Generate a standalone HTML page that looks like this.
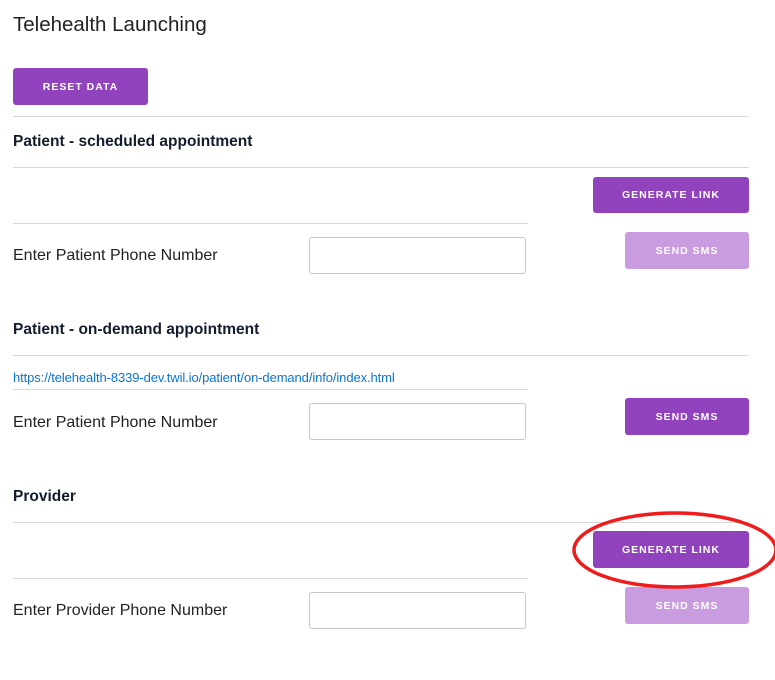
<!DOCTYPE html>
<html><head><style>
body{margin:0;width:775px;height:680px;background:#fff;position:relative;overflow:hidden;font-family:"Liberation Sans",sans-serif;color:#121c2d}
.a{position:absolute}
.hr{position:absolute;height:1px;background:#d8d8d8}
.btn{position:absolute;background:#9143bd;color:#fff;border-radius:3px;font-size:10.5px;font-weight:bold;letter-spacing:1px;display:flex;align-items:center;justify-content:center}
.dis{background:#c99ce0}
.h{position:absolute;left:13px;font-size:15.5px;font-weight:bold;line-height:20px}
.lbl{position:absolute;left:13px;font-size:16px;line-height:20px;color:#222}
.inp{position:absolute;left:309px;width:215px;height:35px;border:1px solid #c8c8c8;border-radius:3px}
</style></head><body>
<div class="a" style="left:13px;top:11px;font-size:20.5px;line-height:28px;color:#222">Telehealth Launching</div>
<div class="btn" style="left:13px;top:68px;width:135px;height:37px">RESET DATA</div>
<div class="hr" style="left:13px;top:116px;width:736px"></div>
<div class="h" style="top:132px">Patient - scheduled appointment</div>
<div class="hr" style="left:13px;top:167px;width:736px"></div>
<div class="btn" style="left:593px;top:177px;width:156px;height:36px">GENERATE LINK</div>
<div class="hr" style="left:13px;top:223px;width:515px"></div>
<div class="lbl" style="top:246px">Enter Patient Phone Number</div>
<div class="inp" style="top:237px"></div>
<div class="btn dis" style="left:625px;top:232px;width:124px;height:37px">SEND SMS</div>
<div class="h" style="top:320px">Patient - on-demand appointment</div>
<div class="hr" style="left:13px;top:355px;width:736px"></div>
<div class="a" style="left:13px;top:370px;font-size:13px;line-height:15px;color:#0a74da;letter-spacing:-0.1px">https://telehealth-8339-dev.twil.io/patient/on-demand/info/index.html</div>
<div class="hr" style="left:13px;top:389px;width:515px"></div>
<div class="lbl" style="top:413px">Enter Patient Phone Number</div>
<div class="inp" style="top:403px"></div>
<div class="btn" style="left:625px;top:398px;width:124px;height:37px">SEND SMS</div>
<div class="h" style="top:487px">Provider</div>
<div class="hr" style="left:13px;top:522px;width:736px"></div>
<div class="btn" style="left:593px;top:531px;width:156px;height:37px">GENERATE LINK</div>
<div class="hr" style="left:13px;top:578px;width:515px"></div>
<div class="lbl" style="top:601px">Enter Provider Phone Number</div>
<div class="inp" style="top:592px"></div>
<div class="btn dis" style="left:625px;top:587px;width:124px;height:37px">SEND SMS</div>
<svg class="a" style="left:0;top:0" width="775" height="680"><ellipse cx="675" cy="550" rx="101" ry="37" fill="none" stroke="#f01c1c" stroke-width="3.5"/></svg>
</body></html>
